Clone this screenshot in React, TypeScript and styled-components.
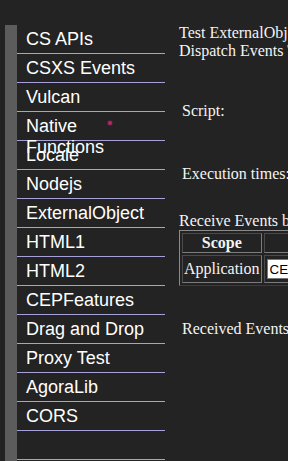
import React from "react";
import styled, { createGlobalStyle } from "styled-components";

const GlobalStyle = createGlobalStyle`
  html, body {
    margin: 0;
    padding: 0;
    background: #232323;
    overflow: hidden;
  }
  body {
    font-family: "Liberation Serif", "Times New Roman", serif;
    font-size: 16px;
    color: #f4f4f4;
  }
`;

const Page = styled.div`
  display: flex;
  align-items: flex-start;
  padding: 24px 0 0 5px;
  height: 461px;
  box-sizing: border-box;
  overflow: hidden;
`;

const Nav = styled.ul`
  flex: none;
  width: 148px;
  margin: 1px 0 0;
  padding: 0;
  list-style: none;
  border-left: 12px solid #5c5c5c;
`;

const NavItem = styled.li`
  position: relative;
  height: 24px;
  padding: 4px 15px 0 9px;
  box-sizing: content-box;
  border-bottom: 1px solid #a7a1d9;
  font-family: "Liberation Sans", Arial, sans-serif;
  font-size: 18px;
  line-height: 21px;
  color: #ffffff;
  cursor: pointer;
`;

const Dot = styled.span`
  position: absolute;
  left: 91px;
  top: 9px;
  width: 4px;
  height: 4px;
  border-radius: 50%;
  background: #b02a68;
  box-shadow: 0 0 2px #b02a68;
`;

const Main = styled.div`
  flex: none;
  width: 520px;
  margin-left: 14px;
`;

const Line = styled.div`
  white-space: nowrap;
`;

const FieldTable = styled.div`
  display: flex;
  flex-direction: column;
  gap: 2px;
  padding: 2px 0;
`;

const FieldRow = styled.div<{ $h: number }>`
  display: flex;
  align-items: center;
  height: ${(p) => p.$h}px;
  padding-left: 3px;
  white-space: nowrap;
`;

const Caption = styled.div<{ $top: number; $indent?: boolean }>`
  margin-top: ${(p) => p.$top}px;
  padding-left: ${(p) => (p.$indent ? 3 : 0)}px;
  white-space: nowrap;
`;

const EventTable = styled.table`
  border-collapse: separate;
  border-spacing: 2px;
  border: 1px solid;
  border-color: #8a8a8a #3c3c3c #3c3c3c #8a8a8a;
`;

const Th = styled.th`
  padding: 0 1px;
  border: 1px solid;
  border-color: #4a4a4a #7c7c7c #7c7c7c #4a4a4a;
  font-weight: bold;
  text-align: center;
`;

const Td = styled.td`
  padding: 1px;
  height: 24px;
  border: 1px solid;
  border-color: #4a4a4a #7c7c7c #7c7c7c #4a4a4a;
  vertical-align: middle;
`;

const EventInput = styled.input`
  display: block;
  width: 150px;
  height: 20px;
  margin: 0 0 0 1px;
  padding: 0 2px;
  box-sizing: border-box;
  border: 1px solid #767676;
  background: #ffffff;
  color: #000;
  font-family: "Liberation Sans", Arial, sans-serif;
  font-size: 13.33px;
`;

const items = [
  "CS APIs",
  "CSXS Events",
  "Vulcan",
  "Native Functions",
  "Locale",
  "Nodejs",
  "ExternalObject",
  "HTML1",
  "HTML2",
  "CEPFeatures",
  "Drag and Drop",
  "Proxy Test",
  "AgoraLib",
  "CORS",
  "",
  "",
];

export default function App() {
  return (
    <>
      <GlobalStyle />
      <Page>
        <Nav>
          {items.map((name, i) => (
            <NavItem key={i}>
              {name}
              {name === "Native Functions" && <Dot />}
            </NavItem>
          ))}
        </Nav>
        <Main>
          <Line>Test ExternalObject</Line>
          <Line>Dispatch Events Test</Line>
          <FieldTable>
            <FieldRow $h={98}>Script:</FieldRow>
            <FieldRow $h={24}>Execution times:</FieldRow>
          </FieldTable>
          <Caption $top={24}>Receive Events by ExternalObject</Caption>
          <EventTable>
            <thead>
              <tr>
                <Th>Scope</Th>
                <Th>Event Type</Th>
              </tr>
            </thead>
            <tbody>
              <tr>
                <Td>Application</Td>
                <Td>
                  <EventInput defaultValue="CEPTestEvent" />
                </Td>
              </tr>
            </tbody>
          </EventTable>
          <Caption $top={34} $indent>
            Received Events:
          </Caption>
        </Main>
      </Page>
    </>
  );
}
